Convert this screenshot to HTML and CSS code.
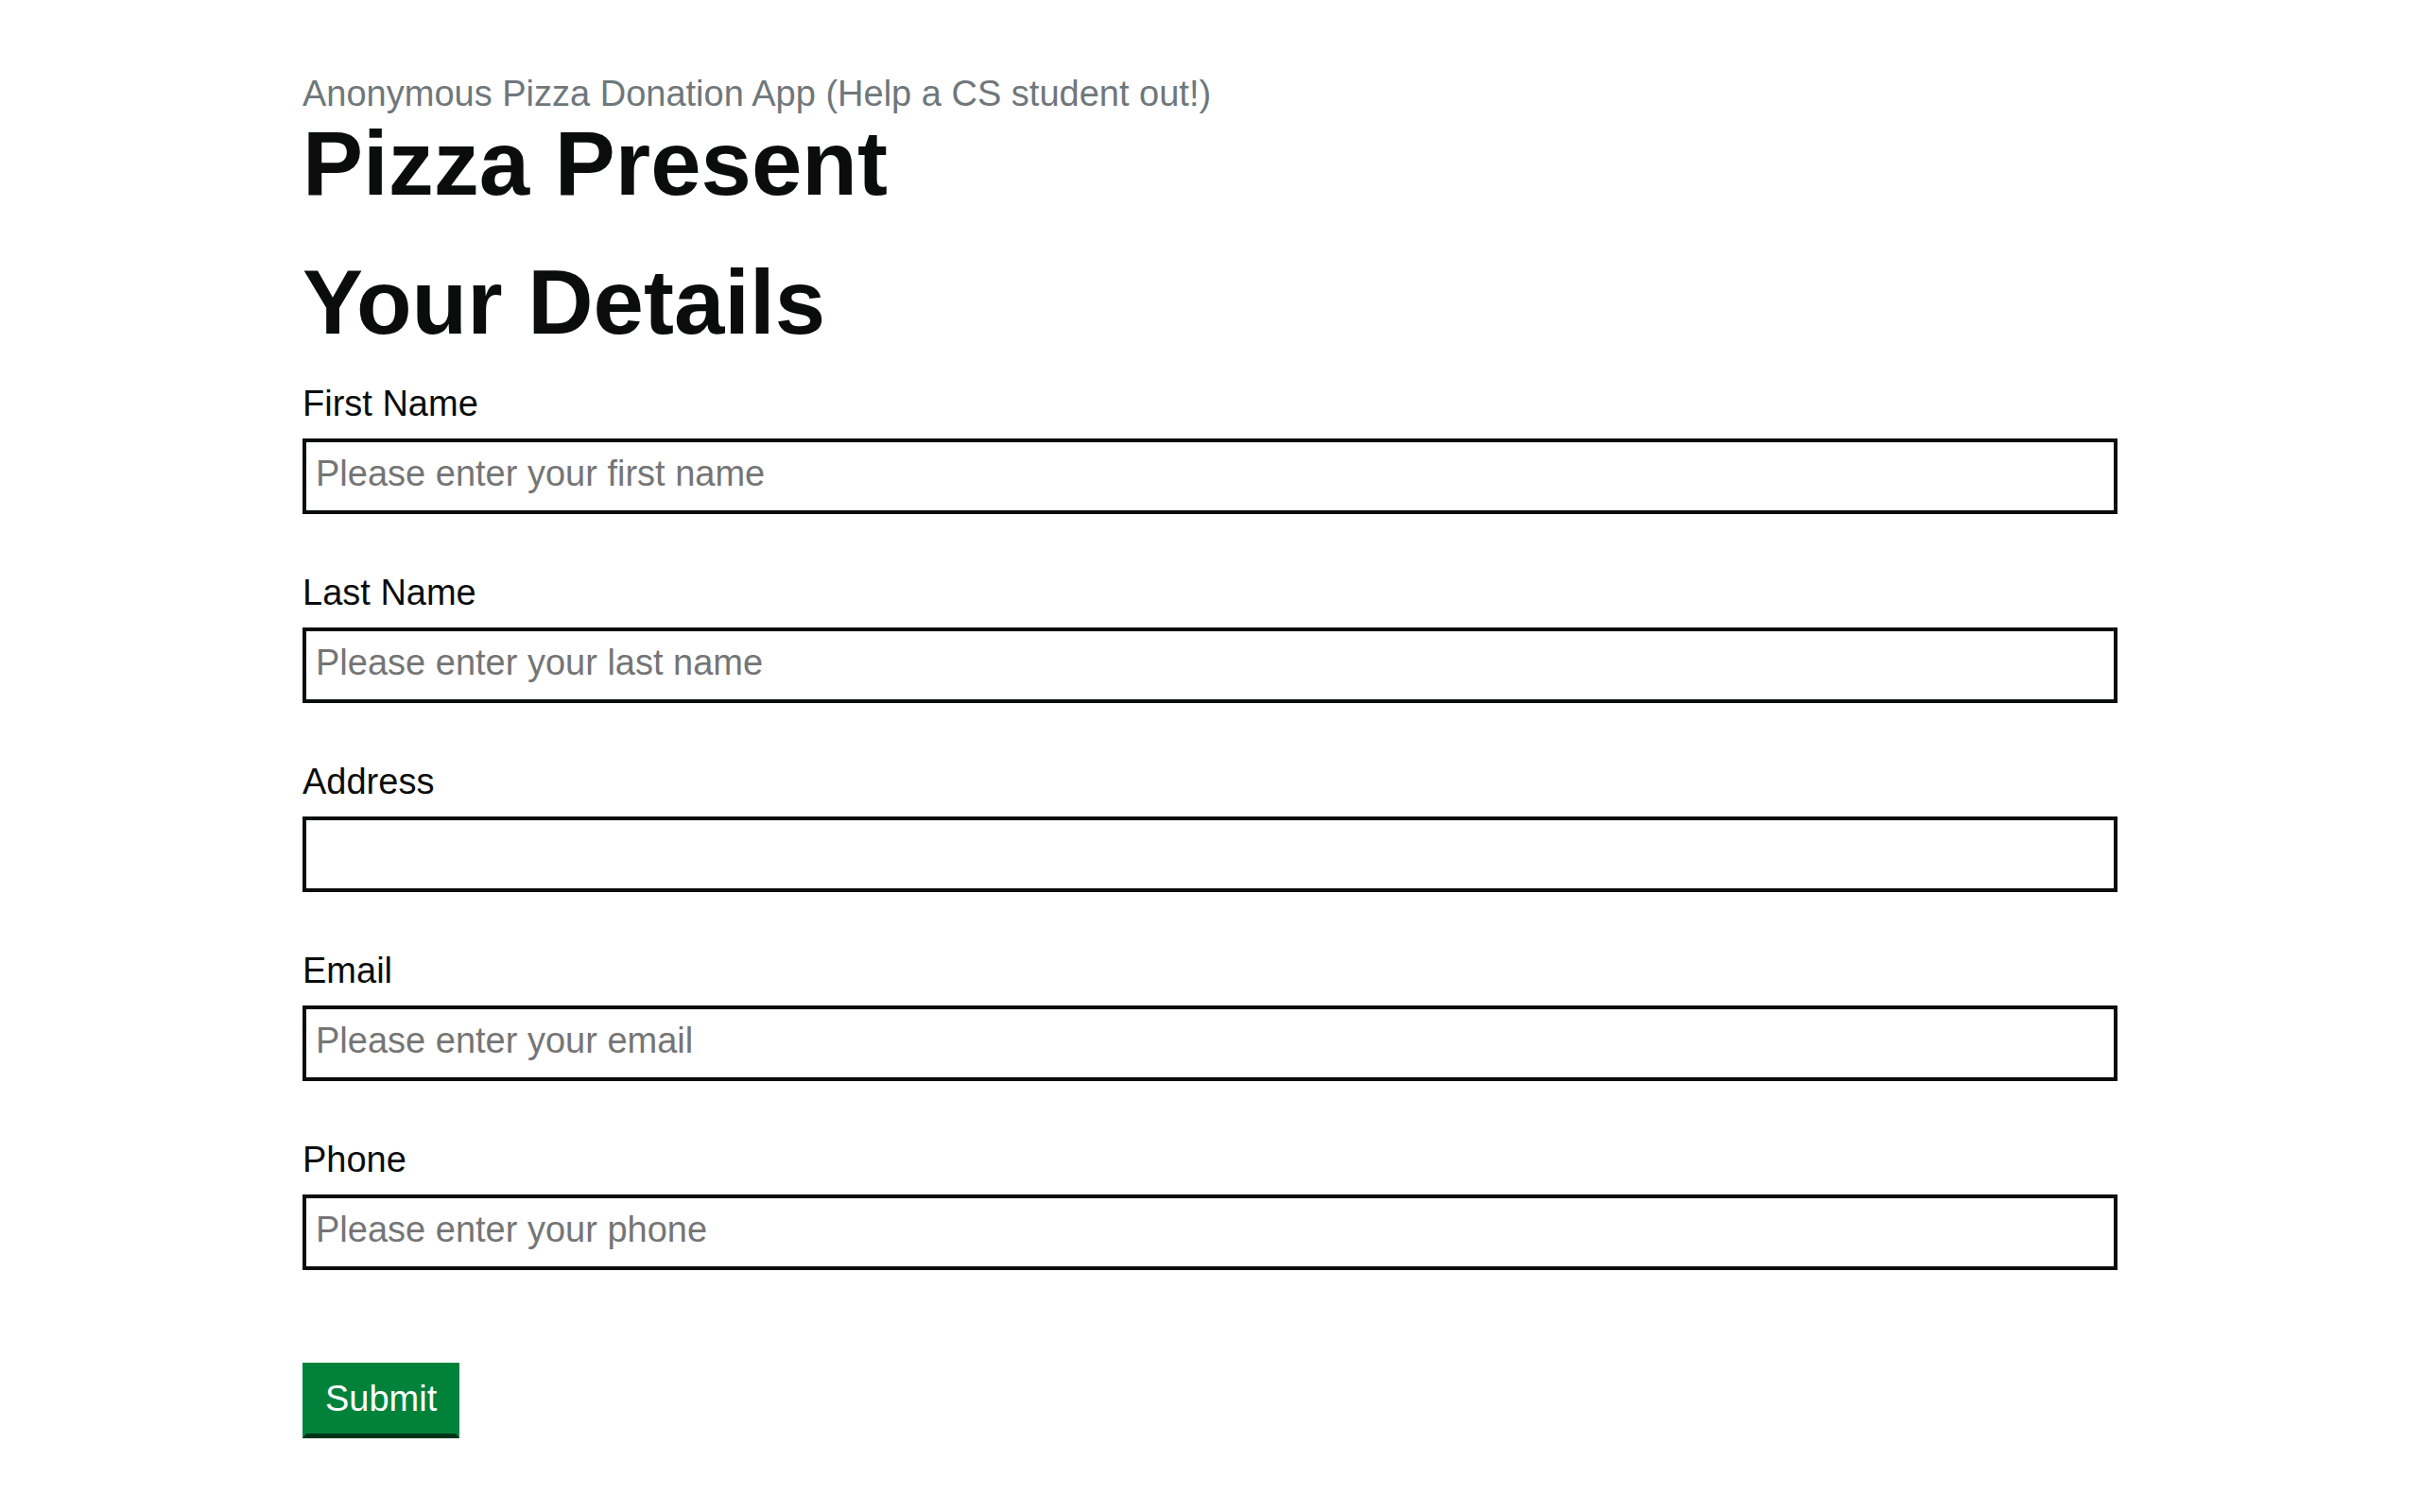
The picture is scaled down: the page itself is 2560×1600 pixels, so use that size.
FILE: index.html
```html
<!DOCTYPE html>
<html lang="en">
<head>
<meta charset="utf-8">
<title>Pizza Present</title>
<link rel="stylesheet" href="styles.css">
</head>
<body>
<main class="container">
  <span class="caption">Anonymous Pizza Donation App (Help a CS student out!)</span>
  <h1 class="heading-xl">Pizza Present</h1>
  <form class="details">
    <h2 class="heading-xl heading-section">Your Details</h2>
    <div class="form-group">
      <label class="label" for="first">First Name</label>
      <input class="input" id="first" type="text" placeholder="Please enter your first name">
    </div>
    <div class="form-group">
      <label class="label" for="last">Last Name</label>
      <input class="input" id="last" type="text" placeholder="Please enter your last name">
    </div>
    <div class="form-group">
      <label class="label" for="address">Address</label>
      <input class="input" id="address" type="text">
    </div>
    <div class="form-group">
      <label class="label" for="email">Email</label>
      <input class="input" id="email" type="text" placeholder="Please enter your email">
    </div>
    <div class="form-group">
      <label class="label" for="phone">Phone</label>
      <input class="input" id="phone" type="text" placeholder="Please enter your phone">
    </div>
    <button class="button" type="button">Submit</button>
  </form>
</main>
</body>
</html>
```

FILE: styles.css
```css
html, body {
  margin: 0;
  padding: 0;
  background: #ffffff;
}

body {
  font-family: "Liberation Sans", Arial, sans-serif;
  color: #0b0c0c;
}

.container {
  width: 1920px;
  margin: 0 auto;
  padding-top: 75px;
  padding-bottom: 40px;
  display: block;
}

.caption {
  display: block;
  font-size: 38px;
  line-height: 48px;
  color: #6f777b;
  margin: 0;
}

.heading-xl {
  font-size: 96px;
  line-height: 100px;
  font-weight: 700;
  margin: 0 0 47px 0;
}

.heading-section {
  margin: 0 0 32px 0;
}

.details {
  margin: 0;
}

.form-group {
  display: flex;
  flex-direction: column;
  margin-bottom: 58px;
}

.label {
  font-size: 38px;
  line-height: 50px;
  color: #0b0c0c;
  margin-bottom: 12px;
}

.input {
  box-sizing: border-box;
  width: 100%;
  height: 80px;
  margin: 0;
  padding: 7px 10px 13px;
  border: 4px solid #0b0c0c;
  border-radius: 0;
  font-family: "Liberation Sans", Arial, sans-serif;
  font-size: 38px;
  line-height: 50px;
  color: #0b0c0c;
  background: #ffffff;
  outline: none;
}

.input::placeholder {
  color: #757575;
  opacity: 1;
}

.button {
  display: block;
  box-sizing: border-box;
  margin-top: 98px;
  height: 80px;
  padding: 13px 20px 17px;
  border: 4px solid #00823b;
  border-bottom: 5px solid #003418;
  border-radius: 0;
  background: #00823b;
  color: #ffffff;
  font-family: "Liberation Sans", Arial, sans-serif;
  font-size: 38px;
  line-height: 1;
  cursor: pointer;
}
```
